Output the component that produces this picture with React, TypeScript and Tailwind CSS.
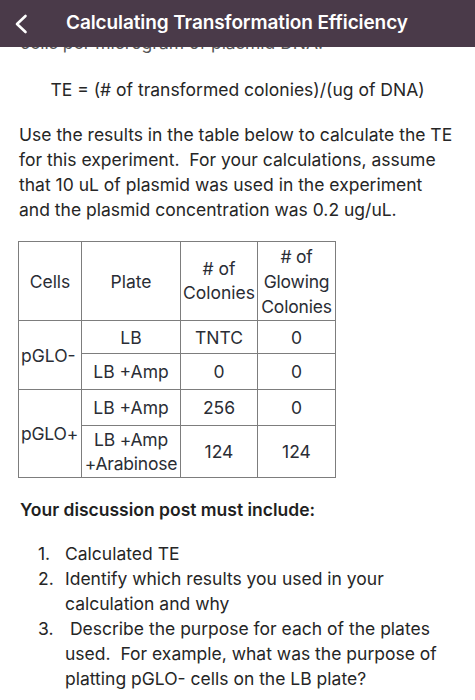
import React from "react";

const font = { fontFamily: "Inter, 'Noto Sans', sans-serif" };

function Cell({
  children,
  className = "",
  rowSpan,
}: {
  children?: React.ReactNode;
  className?: string;
  rowSpan?: number;
}) {
  return (
    <td rowSpan={rowSpan} className={`border border-[#7d7d7d] p-0 ${className}`}>
      {children}
    </td>
  );
}

export default function App() {
  return (
    <div className="w-[475px] h-[700px] bg-white overflow-hidden text-[#262626]" style={font}>
      <div className="h-[47px] bg-[#4a3a49] flex items-center relative z-10">
        <svg width="14" height="20" viewBox="0 0 14 20" className="ml-[14px]" fill="none">
          <path d="M11.5 2 L3 10 L11.5 18" stroke="white" strokeWidth="2.6" strokeLinecap="round" strokeLinejoin="round" />
        </svg>
        <div className="ml-[38px] text-white text-[19px] font-semibold tracking-[-0.1px]">
          Calculating Transformation Efficiency
        </div>
      </div>
      <div className="h-[6px] overflow-hidden">
        <div className="mt-[-17.5px] pl-[20px] text-[17.5px] leading-[25px] text-[#555]">
          cells per microgram of plasmid DNA.
        </div>
      </div>
      <div className="mt-[23.5px] text-center text-[17.5px] leading-[25px]">
        TE = (# of transformed colonies)/(ug of DNA)
      </div>
      <div className="mt-[20px] pl-[19px] text-[17.5px] leading-[25px]">
        <div>Use the results in the table below to calculate the TE</div>
        <div>for this experiment.&nbsp; For your calculations, assume</div>
        <div>that 10 uL of plasmid was used in the experiment</div>
        <div>and the plasmid concentration was 0.2 ug/uL.</div>
      </div>
      <table className="mt-[19.5px] ml-[18px] border-collapse text-[17.5px] leading-[25px] text-[#2a2d35] table-fixed w-[317px]">
        <colgroup>
          <col className="w-[63px]" />
          <col className="w-[99px]" />
          <col className="w-[77px]" />
          <col className="w-[78px]" />
        </colgroup>
        <tbody>
          <tr className="h-[79px]">
            <Cell className="text-center">Cells</Cell>
            <Cell className="text-center">Plate</Cell>
            <Cell className="text-center">
              <div className="leading-[24px]"># of<br />Colonies</div>
            </Cell>
            <Cell className="text-center">
              <div className="leading-[25px] tracking-[-0.2px]"># of<br />Glowing<br />Colonies</div>
            </Cell>
          </tr>
          <tr className="h-[33px]">
            <Cell rowSpan={2} className="text-left pl-[2px]">
              pGLO-
            </Cell>
            <Cell className="text-center">LB</Cell>
            <Cell className="text-center">TNTC</Cell>
            <Cell className="text-center">0</Cell>
          </tr>
          <tr className="h-[36px]">
            <Cell className="text-center">LB +Amp</Cell>
            <Cell className="text-center">0</Cell>
            <Cell className="text-center">0</Cell>
          </tr>
          <tr className="h-[36px]">
            <Cell rowSpan={2} className="text-left pl-[2px] tracking-[-0.2px]">
              pGLO+
            </Cell>
            <Cell className="text-center">LB +Amp</Cell>
            <Cell className="text-center">256</Cell>
            <Cell className="text-center">0</Cell>
          </tr>
          <tr className="h-[52px]">
            <Cell className="text-center leading-[24px] tracking-[-0.2px]">LB +Amp<br />+Arabinose</Cell>
            <Cell className="text-center">124</Cell>
            <Cell className="text-center">124</Cell>
          </tr>
        </tbody>
      </table>
      <div className="mt-[18.5px] pl-[20px] text-[17.5px] leading-[25px] font-semibold text-[#1f1f1f]">
        Your discussion post must include:
      </div>
      <div className="mt-[19px] text-[17.5px] leading-[25px]">
        <div className="flex">
          <div className="w-[65px] shrink-0 pl-[38px]">1.</div>
          <div>Calculated TE</div>
        </div>
        <div className="flex">
          <div className="w-[65px] shrink-0 pl-[38px]">2.</div>
          <div>
            <div>Identify which results you used in your</div>
            <div>calculation and why</div>
          </div>
        </div>
        <div className="flex">
          <div className="w-[65px] shrink-0 pl-[38px]">3.</div>
          <div>
            <div>&nbsp;Describe the purpose for each of the plates</div>
            <div>used.&nbsp; For example, what was the purpose of</div>
            <div>platting pGLO- cells on the LB plate?</div>
          </div>
        </div>
      </div>
    </div>
  );
}
